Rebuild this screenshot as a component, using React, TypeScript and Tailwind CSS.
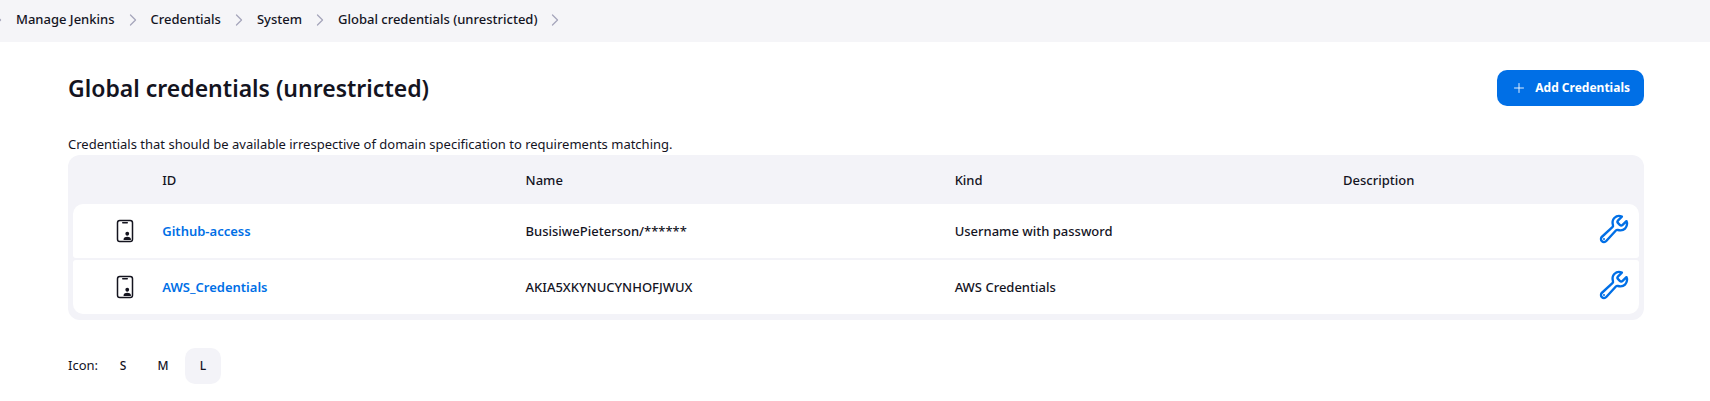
import { IoAdd, IoBuildOutline, IoChevronForward, IoIdCardOutline } from "react-icons/io5";

const crumbs = ["Manage Jenkins", "Credentials", "System", "Global credentials (unrestricted)"];

const credentials = [
  { id: "Github-access", name: "BusisiwePieterson/******", kind: "Username with password", description: "" },
  { id: "AWS_Credentials", name: "AKIA5XKYNUCYNHOFJWUX", kind: "AWS Credentials", description: "" },
];

const iconSizes = ["S", "M", "L"];

function Separator() {
  return <IoChevronForward aria-hidden="true" className="size-[18px] text-[#a5a5bb] [&>path]:stroke-[36px]" />;
}

function Breadcrumbs() {
  return (
    <nav aria-label="Breadcrumbs" className="h-[42px] overflow-hidden bg-[#f5f5f8]">
      <ol className="-ml-[11px] flex h-10 items-center gap-[9px] text-[13px] font-medium">
        <li aria-hidden="true">
          <Separator />
        </li>
        {crumbs.map((crumb) => (
          <li key={crumb} className="flex items-center gap-[9px]">
            <a href="#" className="whitespace-nowrap">{crumb}</a>
            <Separator />
          </li>
        ))}
      </ol>
    </nav>
  );
}

function CredentialsTable() {
  return (
    <div className="rounded-xl bg-[#f3f3f8] px-[5px] pb-1">
      <table className="w-full table-fixed border-separate border-spacing-x-0 border-spacing-y-[2px] text-left text-[13px] font-medium">
        <colgroup>
          <col className="w-[5.7%]" />
          <col className="w-[23.2%]" />
          <col className="w-[27.4%]" />
          <col className="w-[24.8%]" />
          <col />
          <col className="w-16" />
        </colgroup>
        <thead>
          <tr className="h-[45px] [&>th]:pt-0.5 [&>th]:font-medium">
            <th aria-label="Icon" />
            <th>ID</th>
            <th>Name</th>
            <th>Kind</th>
            <th>Description</th>
            <th aria-label="Actions" />
          </tr>
        </thead>
        <tbody className="[&>tr:first-child>td:first-child]:rounded-tl-[10px] [&>tr:first-child>td:last-child]:rounded-tr-[10px] [&>tr:last-child>td:first-child]:rounded-bl-[10px] [&>tr:last-child>td:last-child]:rounded-br-[10px]">
          {credentials.map((item) => (
            <tr key={item.id} className="h-[54px] [&>td]:bg-white">
              <td className="rounded-l-[3px] pl-10">
                <IoIdCardOutline className="size-6" />
              </td>
              <td className="pt-0.5">
                <a href="#" className="font-semibold text-[#006fe6]">{item.id}</a>
              </td>
              <td className="pt-0.5">{item.name}</td>
              <td className="pt-0.5">{item.kind}</td>
              <td className="pt-0.5">{item.description}</td>
              <td className="rounded-r-[3px] pr-[9px] pb-1">
                <a href="#" aria-label={`Update ${item.id}`} className="flex justify-end text-[#006fe6]">
                  <IoBuildOutline className="size-8 [&>path]:stroke-[38px]" />
                </a>
              </td>
            </tr>
          ))}
        </tbody>
      </table>
    </div>
  );
}

export default function App() {
  return (
    <div className="bg-white font-['Noto_Sans','Open_Sans',sans-serif] text-[#14141f]">
      <Breadcrumbs />
      <main className="pt-7 pr-[66px] pl-[68px]">
        <header className="flex items-center justify-between">
          <h1 className="text-[23px] leading-9 font-semibold">Global credentials (unrestricted)</h1>
          <button type="button" className="flex h-9 items-center gap-2 rounded-[10px] bg-[#006fe6] px-3.5 text-xs font-bold text-white">
            <IoAdd aria-hidden="true" className="size-4 [&>path]:stroke-[28px]" />
            Add Credentials
          </button>
        </header>
        <p className="mt-7 text-[13px] leading-[21px]">
          Credentials that should be available irrespective of domain specification to requirements matching.
        </p>
        <CredentialsTable />
        <div className="mt-7 flex items-center text-[13px]">
          <span className="w-[37px]">Icon:</span>
          <div role="group" aria-label="Icon size" className="flex gap-1">
            {iconSizes.map((size) => (
              <button
                key={size}
                type="button"
                aria-pressed={size === "L"}
                className="size-9 rounded-[10px] text-xs font-medium aria-pressed:bg-[#f3f3f8]"
              >
                {size}
              </button>
            ))}
          </div>
        </div>
      </main>
    </div>
  );
}
